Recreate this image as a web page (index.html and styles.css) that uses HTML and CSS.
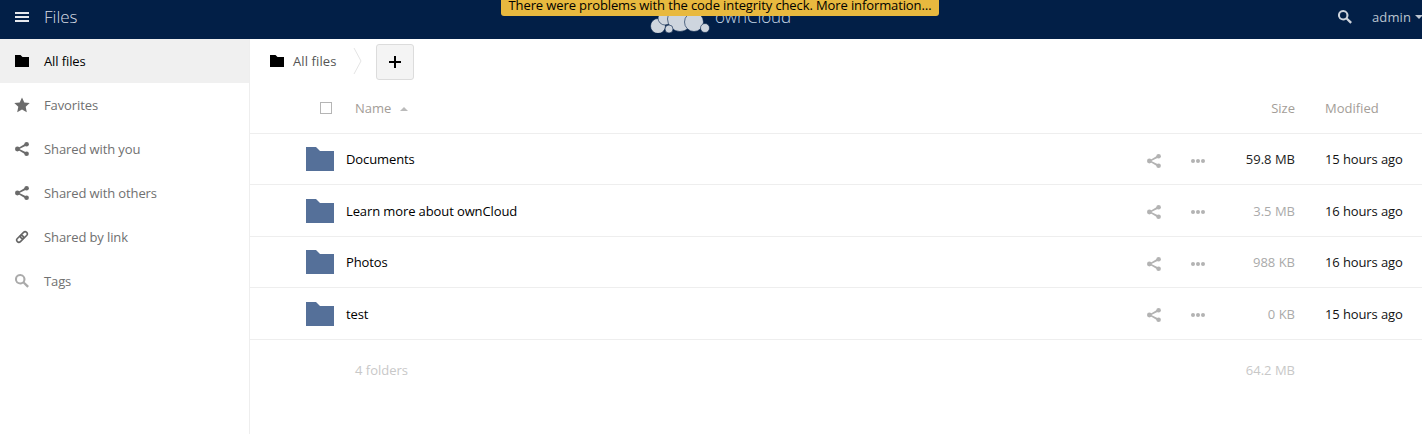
FILE: index.html
```html
<!DOCTYPE html>
<html lang="en">
<head>
<meta charset="utf-8">
<title>Files - ownCloud</title>
<link rel="stylesheet" href="styles.css">
</head>
<body>
<svg class="defs" width="0" height="0" aria-hidden="true">
  <symbol id="i-share" viewBox="0 0 14 14"><circle cx="11.600" cy="2.300" r="2.300"/><circle cx="2.400" cy="7" r="2.400"/><circle cx="11.600" cy="11.700" r="2.300"/><path d="M11 1.200l1 2L4.300 7l7.700 3.800-1 2L1.500 7z"/></symbol>
  <symbol id="i-folder" viewBox="0 0 14 14"><path d="M0 1h5.500L7.500 3H14v10H0z"/></symbol>
  <symbol id="i-search" viewBox="1 1 14 14"><path d="M6.200 1a5.200 5.200 0 1 0 2.900 9.500l4.200 4.300 1.700-1.700-4.300-4.200A5.200 5.200 0 0 0 6.200 1zm0 2a3.200 3.200 0 1 1 0 6.400 3.200 3.200 0 0 1 0-6.400z"/></symbol>
  <symbol id="i-dir" viewBox="0 0 28 24"><path d="M0 0h10l4 4h14v20H0z"/></symbol>
</svg>
<header class="topbar">
  <div class="app-menu">
    <svg class="burger" viewBox="0 0 14 10"><path d="M0 0h14v2H0zM0 4h14v2H0zM0 8h14v2H0z"/></svg>
    <span class="app-name">Files</span>
  </div>
  <div class="top-right">
    <svg class="top-search"><use href="#i-search"/></svg>
    <span class="user">admin</span>
    <span class="caret"></span>
  </div>
  <div class="logo">
    <svg class="cloud" viewBox="0 0 62 26"><g><circle cx="9" cy="19" r="7.500"/><circle cx="16" cy="11" r="7"/><circle cx="31" cy="12" r="12.500"/><circle cx="45" cy="15" r="9.500"/><circle cx="56" cy="21" r="4.500"/><circle cx="20" cy="22" r="4"/></g></svg>
    <span class="logo-text">ownCloud</span>
  </div>
  <div class="warning">There were problems with the code integrity check. More information…</div>
</header>
<div class="shell">
  <nav class="sidebar">
    <a class="nav-item active"><svg class="nav-icon black"><use href="#i-folder"/></svg>All files</a>
    <a class="nav-item"><svg class="nav-icon star" viewBox="0 0 16 16"><path d="M8 .5l2.300 5 5.400.6-4 3.700 1.100 5.400L8 12.500l-4.800 2.700 1.100-5.400-4-3.700 5.400-.6z"/></svg>Favorites</a>
    <a class="nav-item"><svg class="nav-icon"><use href="#i-share"/></svg>Shared with you</a>
    <a class="nav-item"><svg class="nav-icon"><use href="#i-share"/></svg>Shared with others</a>
    <a class="nav-item"><svg class="nav-icon link-icon" viewBox="0 0 16 16"><g transform="rotate(-45 8 8)"><rect x="0.500" y="5.500" width="9" height="5" rx="2.500"/><rect x="6.500" y="5.500" width="9" height="5" rx="2.500"/></g></svg>Shared by link</a>
    <a class="nav-item"><svg class="nav-icon light"><use href="#i-search"/></svg>Tags</a>
  </nav>
  <main class="content">
    <div class="crumbs">
      <svg class="crumb-icon"><use href="#i-folder"/></svg>
      <span class="crumb-label">All files</span>
      <svg class="crumb-sep" viewBox="0 0 9 26"><path d="M1 0l7 13-7 13"/></svg>
      <button class="add"><svg viewBox="0 0 12 12"><path d="M5 0h2v5h5v2H7v5H5V7H0V5h5z"/></svg></button>
    </div>
    <div class="row head">
      <span class="check"></span>
      <span class="col-name">Name<i class="sort"></i></span>
      <span class="col-size">Size</span>
      <span class="col-mod">Modified</span>
    </div>
    <div class="row file">
      <svg class="folder"><use href="#i-dir"/></svg>
      <span class="fname">Documents</span>
      <svg class="act-share"><use href="#i-share"/></svg>
      <svg class="act-more" viewBox="0 0 14 4"><circle cx="2" cy="2" r="2"/><circle cx="7" cy="2" r="2"/><circle cx="12" cy="2" r="2"/></svg>
      <span class="fsize s1">59.8 MB</span>
      <span class="fmod">15 hours ago</span>
    </div>
    <div class="row file">
      <svg class="folder"><use href="#i-dir"/></svg>
      <span class="fname">Learn more about ownCloud</span>
      <svg class="act-share"><use href="#i-share"/></svg>
      <svg class="act-more" viewBox="0 0 14 4"><circle cx="2" cy="2" r="2"/><circle cx="7" cy="2" r="2"/><circle cx="12" cy="2" r="2"/></svg>
      <span class="fsize s2">3.5 MB</span>
      <span class="fmod">16 hours ago</span>
    </div>
    <div class="row file">
      <svg class="folder"><use href="#i-dir"/></svg>
      <span class="fname">Photos</span>
      <svg class="act-share"><use href="#i-share"/></svg>
      <svg class="act-more" viewBox="0 0 14 4"><circle cx="2" cy="2" r="2"/><circle cx="7" cy="2" r="2"/><circle cx="12" cy="2" r="2"/></svg>
      <span class="fsize s2">988 KB</span>
      <span class="fmod">16 hours ago</span>
    </div>
    <div class="row file">
      <svg class="folder"><use href="#i-dir"/></svg>
      <span class="fname">test</span>
      <svg class="act-share"><use href="#i-share"/></svg>
      <svg class="act-more" viewBox="0 0 14 4"><circle cx="2" cy="2" r="2"/><circle cx="7" cy="2" r="2"/><circle cx="12" cy="2" r="2"/></svg>
      <span class="fsize s2">0 KB</span>
      <span class="fmod">15 hours ago</span>
    </div>
    <div class="row summary">
      <span class="sum-name">4 folders</span>
      <span class="sum-size">64.2 MB</span>
    </div>
  </main>
</div>
</body>
</html>
```

FILE: styles.css
```css
* { box-sizing: border-box; }
html, body { margin: 0; height: 100%; overflow: hidden; }
body { font-family: "Open Sans", "Liberation Sans", sans-serif; font-size: 13px; letter-spacing: -.11px; color: #000; background: #fff; }
.defs { position: absolute; }

.topbar { position: relative; height: 39px; padding-bottom: 5px; background: #021f47; display: flex; justify-content: space-between; align-items: center; color: #fff; overflow: hidden; }
.app-menu { display: flex; align-items: center; padding-left: 15px; }
.burger { width: 14px; height: 10px; fill: #e6e9ee; margin-right: 15px; }
.app-name { font-size: 17px; letter-spacing: 0; color: #d8dde5; font-weight: 300; margin-top: -2px; }
.top-right { display: flex; align-items: center; }
.top-search { width: 14px; height: 14px; fill: #cdd3dc; margin-right: 20px; }
.user { color: #bcc4d0; font-size: 13px; letter-spacing: .1px; }
.caret { width: 0; height: 0; border: 4px solid transparent; border-top-color: #bcc4d0; border-bottom: 0; margin-left: 4px; margin-right: -1px; }

.logo { position: absolute; left: 649px; top: 7px; display: flex; }
.cloud { width: 62px; height: 26px; fill: #ced5de; stroke: #021f47; stroke-width: .6; }
.logo-text { font-size: 17px; letter-spacing: -.1px; font-weight: 300; color: #c4d6e6; position: absolute; left: 66px; top: -2px; white-space: nowrap; }
.warning { position: absolute; left: 501px; top: 0; width: 438px; height: 16px; background: #e8b93f; border-radius: 0 0 3px 3px; color: #000; font-size: 13px; letter-spacing: -.11px; line-height: 10px; text-align: center; white-space: nowrap; }

.shell { display: flex; height: 395px; }
.sidebar { width: 250px; flex: none; border-right: 1px solid #eee; }
.nav-item { display: flex; align-items: center; height: 44px; padding-left: 15px; color: #707070; font-size: 13px; }
.nav-item.active { background: #f0f0f0; color: #000; }
.nav-icon { width: 14px; height: 14px; margin-right: 15px; flex: none; fill: #6b6b6b; }
.nav-icon.black { fill: #000; }
.nav-icon.light { fill: #aaa; }
.nav-icon.star { width: 16px; height: 16px; margin-left: -1px; margin-right: 14px; }
.nav-icon.link-icon { fill: none; stroke: #666; stroke-width: 1.8; }

.content { flex: 1; min-width: 0; }
.crumbs { height: 44px; display: flex; align-items: center; padding-left: 20px; }
.crumb-icon { width: 14px; height: 14px; flex: none; fill: #000; margin-right: 9px; }
.crumb-label { color: #555; letter-spacing: .1px; width: 44px; white-space: nowrap; }
.crumb-sep { width: 9px; height: 26px; margin-left: 16px; fill: none; stroke: #e4e4e4; }
.add { width: 38px; height: 36px; margin: 2px 0 0 14px; padding: 0; background: #f4f4f4; border: 1px solid #dcdcdc; border-radius: 3px; display: flex; align-items: center; justify-content: center; }
.add svg { width: 12px; height: 12px; fill: #000; }

.row { display: flex; align-items: center; }
.head { height: 50.9px; border-bottom: 1px solid #eee; }
.check { width: 12px; height: 12px; margin-left: 70px; border: 1px solid #b5b5b5; flex: none; }
.col-name { margin-left: 23px; flex: 1; color: #a39d97; letter-spacing: 0; }
.sort { display: inline-block; width: 0; height: 0; border: 4px solid transparent; border-bottom-color: #bbb; border-top: 0; margin-left: 9px; vertical-align: 2px; }
.col-size { color: #a39d97; margin-right: 30px; letter-spacing: 0; }
.col-mod { color: #a39d97; width: 97px; letter-spacing: 0; }

.file { height: 51.5px; border-bottom: 1px solid #eee; }
.folder { width: 28px; height: 24px; margin-left: 56px; fill: #557099; flex: none; }
.fname { margin-left: 12px; flex: 1; color: #000; }
.act-share { width: 14px; height: 14px; margin-top: 3px; fill: #b3b3b3; flex: none; margin-right: 30px; }
.act-more { width: 14px; height: 4px; margin-top: 3px; fill: #b3b3b3; flex: none; }
.fsize { width: 90px; text-align: right; margin-right: 30px; flex: none; letter-spacing: 0; }
.s1 { color: #222; }
.s2 { color: #aaa; }
.fmod { width: 97px; flex: none; color: #111; }

.summary { height: 60px; color: #c8c8c8; letter-spacing: 0; }
.sum-name { margin-left: 105px; flex: 1; }
.sum-size { margin-right: 127px; }
```
